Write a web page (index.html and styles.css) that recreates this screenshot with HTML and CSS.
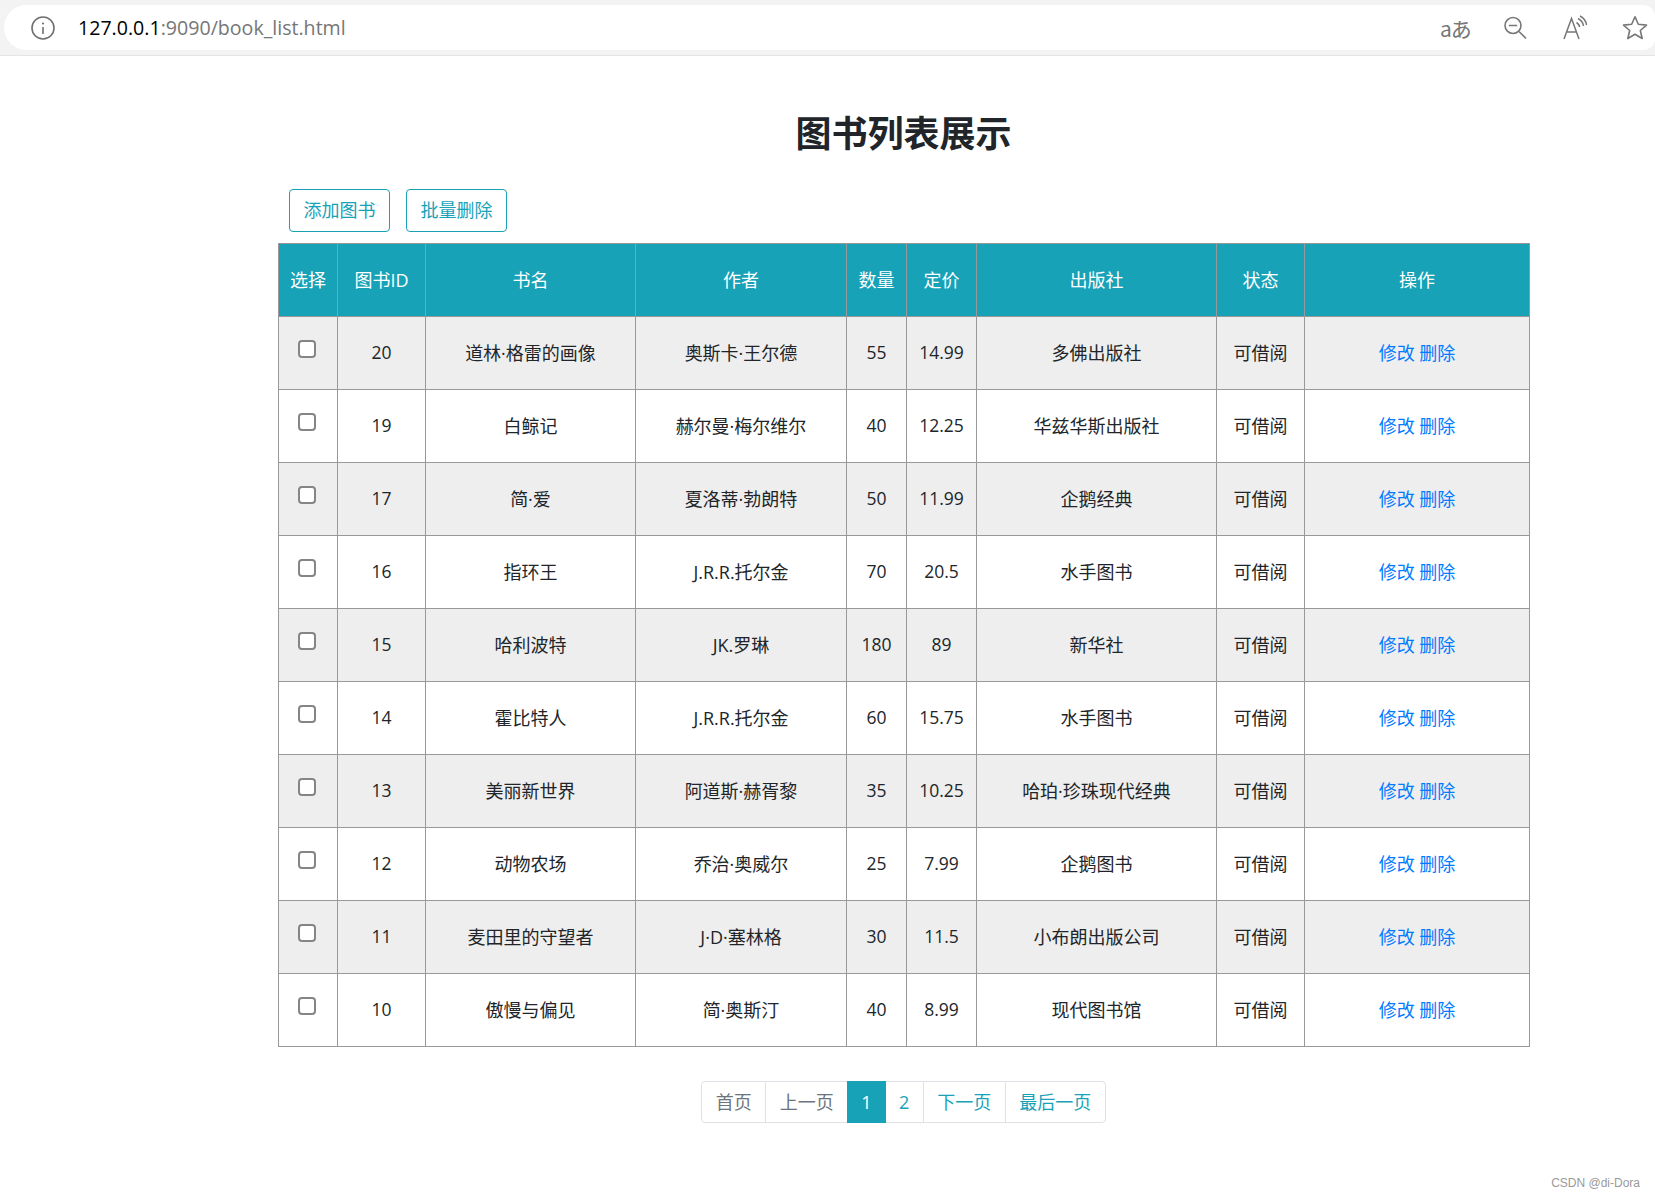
FILE: index.html
```html
<!DOCTYPE html>
<html lang="zh-CN">
<head>
<meta charset="utf-8">
<title>图书列表展示</title>
<link rel="stylesheet" href="styles.css">
</head>
<body>
<header class="chrome">
  <div class="address">
    <svg class="info" width="26" height="26" viewBox="0 0 26 26"><circle cx="13" cy="13" r="11" fill="none" stroke="#707070" stroke-width="1.6"/><path d="M13 12v7" stroke="#707070" stroke-width="1.6"/><circle cx="13" cy="8.5" r="1.1" fill="#707070"/></svg>
    <div class="url"><span class="host">127.0.0.1</span>:9090/book_list.html</div>
    <div class="tools">
      <span class="translate">aあ</span>
      <svg width="26" height="26" viewBox="0 0 26 26"><circle cx="11" cy="10.5" r="8" fill="none" stroke="#777" stroke-width="1.6"/><path d="M6.8 10.5h8.4M17 16.5l7 7" stroke="#777" stroke-width="1.6" fill="none"/></svg>
      <svg width="26" height="26" viewBox="0 0 26 26"><path d="M2 24 9.5 3.5 17 24M4.8 17h9.4" stroke="#777" stroke-width="1.5" fill="none"/><path d="M14.500 7.500c1.700 1 2.800 2.500 3.200 4.500M16 3.500c3 1.500 5 4 5.500 7.500M18 1c3.500 1.800 6 5 6.500 9" stroke="#777" stroke-width="1.500" fill="none"/></svg>
      <svg width="26" height="26" viewBox="0 0 26 26"><path d="M13 1.800l3.300 7.500 8.200.8-6.200 5.400 1.900 8-7.200-4.300-7.200 4.300 1.900-8L1.500 10.100l8.200-.8z" fill="none" stroke="#777" stroke-width="1.600" stroke-linejoin="round"/></svg>
    </div>
  </div>
</header>
<main class="page">
  <h1 class="title">图书列表展示</h1>
  <div class="actions">
    <button class="btn">添加图书</button>
    <button class="btn">批量删除</button>
  </div>
  <table class="books">
    <colgroup>
      <col class="c-select"><col class="c-id"><col class="c-name"><col class="c-author"><col class="c-num"><col class="c-price"><col class="c-press"><col class="c-state"><col class="c-op">
    </colgroup>
    <thead>
      <tr><th>选择</th><th>图书ID</th><th>书名</th><th>作者</th><th>数量</th><th>定价</th><th>出版社</th><th>状态</th><th>操作</th></tr>
    </thead>
    <tbody>
      <tr><td><input type="checkbox" class="check"></td><td>20</td><td>道林·格雷的画像</td><td>奥斯卡·王尔德</td><td>55</td><td>14.99</td><td>多佛出版社</td><td>可借阅</td><td><a href="#">修改</a> <a href="#">删除</a></td></tr>
      <tr><td><input type="checkbox" class="check"></td><td>19</td><td>白鲸记</td><td>赫尔曼·梅尔维尔</td><td>40</td><td>12.25</td><td>华兹华斯出版社</td><td>可借阅</td><td><a href="#">修改</a> <a href="#">删除</a></td></tr>
      <tr><td><input type="checkbox" class="check"></td><td>17</td><td>简·爱</td><td>夏洛蒂·勃朗特</td><td>50</td><td>11.99</td><td>企鹅经典</td><td>可借阅</td><td><a href="#">修改</a> <a href="#">删除</a></td></tr>
      <tr><td><input type="checkbox" class="check"></td><td>16</td><td>指环王</td><td>J.R.R.托尔金</td><td>70</td><td>20.5</td><td>水手图书</td><td>可借阅</td><td><a href="#">修改</a> <a href="#">删除</a></td></tr>
      <tr><td><input type="checkbox" class="check"></td><td>15</td><td>哈利波特</td><td>JK.罗琳</td><td>180</td><td>89</td><td>新华社</td><td>可借阅</td><td><a href="#">修改</a> <a href="#">删除</a></td></tr>
      <tr><td><input type="checkbox" class="check"></td><td>14</td><td>霍比特人</td><td>J.R.R.托尔金</td><td>60</td><td>15.75</td><td>水手图书</td><td>可借阅</td><td><a href="#">修改</a> <a href="#">删除</a></td></tr>
      <tr><td><input type="checkbox" class="check"></td><td>13</td><td>美丽新世界</td><td>阿道斯·赫胥黎</td><td>35</td><td>10.25</td><td>哈珀·珍珠现代经典</td><td>可借阅</td><td><a href="#">修改</a> <a href="#">删除</a></td></tr>
      <tr><td><input type="checkbox" class="check"></td><td>12</td><td>动物农场</td><td>乔治·奥威尔</td><td>25</td><td>7.99</td><td>企鹅图书</td><td>可借阅</td><td><a href="#">修改</a> <a href="#">删除</a></td></tr>
      <tr><td><input type="checkbox" class="check"></td><td>11</td><td>麦田里的守望者</td><td>J·D·塞林格</td><td>30</td><td>11.5</td><td>小布朗出版公司</td><td>可借阅</td><td><a href="#">修改</a> <a href="#">删除</a></td></tr>
      <tr><td><input type="checkbox" class="check"></td><td>10</td><td>傲慢与偏见</td><td>简·奥斯汀</td><td>40</td><td>8.99</td><td>现代图书馆</td><td>可借阅</td><td><a href="#">修改</a> <a href="#">删除</a></td></tr>
    </tbody>
  </table>
  <nav class="pager">
    <a class="pg muted">首页</a><a class="pg muted">上一页</a><a class="pg current">1</a><a class="pg">2</a><a class="pg">下一页</a><a class="pg">最后一页</a>
  </nav>
</main>
<div class="watermark">CSDN @di-Dora</div>
</body>
</html>
```
FILE: styles.css
```css
* { box-sizing: border-box; }
html, body { margin: 0; padding: 0; }
body {
  background: #fff;
  color: #212529;
  font-family: "Open Sans", "Noto Sans CJK SC", sans-serif;
  font-size: 18px;
  height: 1197px;
  position: relative;
  overflow: hidden;
}
.chrome {
  height: 56px;
  background: #f3f3f3;
  border-bottom: 1px solid #e4e4e4;
  padding: 5px 0 5px 4px;
}
.address {
  height: 45px;
  background: #fff;
  border-radius: 23px 12px 12px 23px;
  display: flex;
  align-items: center;
  padding-left: 26px;
}
.url {
  margin-left: 22px;
  font-family: "Open Sans", sans-serif;
  font-size: 19.6px;
  color: #767676;
}
.host { color: #000; }
.tools {
  margin-left: auto;
  display: flex;
  align-items: center;
  gap: 34px;
  padding-right: 7px;
}
.translate { font-size: 21px; color: #777; font-family: "Noto Sans CJK JP", sans-serif; width: 28px; white-space: nowrap; letter-spacing: -1px; }
.page { width: 1251px; margin-left: 278px; }
.title {
  margin: 51px 0 0;
  height: 48px;
  line-height: 48px;
  text-align: center;
  font-size: 36px;
  font-weight: 700;
  font-family: "Noto Sans CJK SC", sans-serif;
}
.actions {
  margin-top: 34px;
  padding-left: 11px;
  display: flex;
  gap: 16px;
}
.btn {
  width: 101px;
  height: 43px;
  padding: 0 0 3px;
  background: #fff;
  border: 1px solid #17a2b8;
  border-radius: 4px;
  color: #17a2b8;
  font: inherit;
}
.books {
  margin-top: 11px;
  width: 1251px;
  table-layout: fixed;
  border-collapse: collapse;
}
.c-select { width: 59px; }
.c-id { width: 88px; }
.c-name { width: 210px; }
.c-author { width: 211px; }
.c-num { width: 60px; }
.c-price { width: 70px; }
.c-press { width: 240px; }
.c-state { width: 88px; }
.c-op { width: 225px; }
.books th, .books td {
  height: 73px;
  padding: 0 0 3px;
  border: 1px solid #999;
  text-align: center;
  vertical-align: middle;
  font-weight: 400;
}
.books th { background: #17a2b8; color: #fff; }
.books tbody tr:nth-child(odd) td { background: #eee; }
.books td:nth-child(2), .books td:nth-child(5), .books td:nth-child(6) { font-size: 17.5px; }
.books a { color: #007bff; text-decoration: none; }
.check {
  appearance: none;
  display: block;
  width: 18px;
  height: 18px;
  margin: 0 0 5px 19px;
  background: #fff;
  border: 2px solid #858585;
  border-radius: 4px;
}
.pager {
  margin: 34px auto 0;
  width: max-content;
  display: flex;
  height: 42px;
  border: 1px solid #dee2e6;
  border-radius: 4px;
}
.pg {
  padding: 0 13.5px;
  line-height: 40px;
  color: #17a2b8;
  border-left: 1px solid #dee2e6;
}
.pg:first-child { border-left: 0; }
.muted { color: #6c757d; }
.current {
  padding: 0 14px;
  background: #17a2b8;
  color: #fff;
  border-left: 0;
  margin: -1px 0;
  height: 42px;
  line-height: 42px;
}
.current + .pg { border-left: 0; }
.watermark {
  position: absolute;
  right: 15px;
  bottom: 7px;
  font-family: "Liberation Sans", sans-serif;
  font-size: 12px;
  color: #999;
}
```
